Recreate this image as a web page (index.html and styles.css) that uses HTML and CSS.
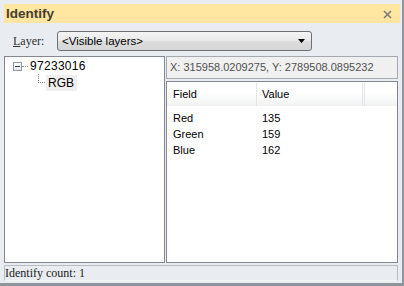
FILE: index.html
```html
<!DOCTYPE html>
<html>
<head>
<meta charset="utf-8">
<link rel="stylesheet" href="styles.css">
</head>
<body>
<div class="window">
  <div class="titlebar">
    <span class="title">Identify</span>
    <svg class="close" width="9" height="9" viewBox="0 0 9 9"><path d="M1 1 L8 8 M8 1 L1 8" stroke="#7b7b7b" stroke-width="1.6"/></svg>
  </div>
  <div class="toolbar">
    <span class="layer-label"><u>L</u>ayer:</span>
    <div class="combo">
      <span class="combo-text">&lt;Visible layers&gt;</span>
      <svg class="combo-arrow" width="7" height="4" viewBox="0 0 7 4"><path d="M0 0 H7 L3.5 4 Z" fill="#000"/></svg>
    </div>
  </div>
  <div class="panels">
    <div class="tree">
      <div class="node root">
        <span class="expander"><span class="minus"></span></span>
        <span class="hdots"></span>
        <span class="node-label">97233016</span>
      </div>
      <div class="node child">
        <svg class="connector" width="8" height="17" viewBox="0 0 8 17"><path d="M0.5 0 V9 M0 8.5 H8" stroke="#888" stroke-width="1" stroke-dasharray="1 1"/></svg>
        <span class="node-label selected">RGB</span>
      </div>
    </div>
    <div class="right">
      <div class="coords">X: 315958.0209275, Y: 2789508.0895232</div>
      <div class="list">
        <div class="list-head">
          <div class="col c-field">Field</div>
          <div class="col c-value">Value</div>
          <div class="col c-extra"></div>
        </div>
        <div class="row"><div class="col c-field">Red</div><div class="col c-value">135</div></div>
        <div class="row"><div class="col c-field">Green</div><div class="col c-value">159</div></div>
        <div class="row"><div class="col c-field">Blue</div><div class="col c-value">162</div></div>
      </div>
    </div>
  </div>
  <div class="status">Identify count: 1</div>
</div>
</body>
</html>
```

FILE: styles.css
```css
html, body {
  margin: 0;
  padding: 0;
}
body {
  width: 404px;
  height: 286px;
  overflow: hidden;
  background: #e9ecf0;
}
.window {
  width: 404px;
  height: 286px;
  box-sizing: border-box;
  background: #e9ecf0;
  border-right: 2px solid #8f959c;
  border-bottom: 3px solid #8f959c;
  padding: 4px 0 0 4px;
  display: flex;
  flex-direction: column;
  font-family: "Liberation Sans", Arial, sans-serif;
}
.titlebar {
  height: 19px;
  margin-right: 2px;
  background: #ffe6a1;
  display: flex;
  align-items: center;
  justify-content: space-between;
  padding: 0 8px 0 2px;
}
.title {
  font-weight: bold;
  font-size: 13.5px;
  color: #463d30;
  line-height: 19px;
}
.close {
  display: block;
  margin-top: 1px;
}
.toolbar {
  margin-top: 8px;
  height: 20px;
  display: flex;
  align-items: center;
}
.layer-label {
  font-family: "Liberation Serif", "Times New Roman", serif;
  font-size: 12px;
  color: #333;
  width: 44px;
  padding-left: 9px;
}
.combo {
  box-sizing: border-box;
  width: 255px;
  height: 20px;
  border: 1px solid #707070;
  border-radius: 3px;
  background: linear-gradient(#f4f4f4, #e9e9e9 50%, #dcdcdc 51%, #d6d6d6);
  display: flex;
  align-items: center;
  justify-content: space-between;
  padding: 0 6px 0 4px;
}
.combo-text {
  font-size: 11.5px;
  color: #000;
}
.combo-arrow {
  display: block;
}
.panels {
  margin-top: 5px;
  height: 207px;
  width: 394px;
  display: flex;
  gap: 1px;
}
.tree {
  box-sizing: border-box;
  width: 161px;
  border: 1px solid #828790;
  background: #fff;
  padding-top: 1px;
}
.node {
  display: flex;
  align-items: center;
  font-size: 12px;
  color: #000;
}
.root {
  height: 16px;
  padding-left: 8px;
}
.expander {
  box-sizing: border-box;
  width: 9px;
  height: 9px;
  border: 1px solid #8e9aa8;
  background: linear-gradient(#fff, #e6e6e6);
  display: flex;
  align-items: center;
  justify-content: center;
}
.minus {
  width: 5px;
  height: 1px;
  background: #26476b;
}
.hdots {
  width: 6px;
  border-top: 1px dotted #888;
  margin-right: 2px;
}
.node-label {
  letter-spacing: 0.3px;
}
.child {
  height: 18px;
  padding-left: 33px;
  align-items: flex-start;
}
.connector {
  display: block;
}
.selected {
  margin-top: 1px;
  height: 16px;
  line-height: 16px;
  padding: 0 3px 0 2px;
  background: #efefef;
  letter-spacing: 0;
}
.right {
  width: 232px;
  display: flex;
  flex-direction: column;
  gap: 2px;
}
.coords {
  box-sizing: border-box;
  height: 23px;
  border: 1px solid #a4a9b0;
  background: #f0f0f0;
  color: #505050;
  font-size: 11px;
  line-height: 21px;
  padding-left: 3px;
  white-space: nowrap;
}
.list {
  flex: 1;
  box-sizing: border-box;
  border: 1px solid #828790;
  background: #fff;
  font-size: 11px;
  color: #000;
}
.list-head {
  display: flex;
  height: 23px;
  background: linear-gradient(#ffffff, #ffffff 40%, #f1f2f3);
  margin-top: 1px;
  margin-bottom: 4px;
}
.list-head .col {
  line-height: 23px;
  border-right: 1px solid #e4e5e7;
}
.list-head .c-extra {
  width: 2px;
  border-left: 1px solid #e4e5e7;
  border-right: none;
  margin-left: 1px;
}
.col {
  box-sizing: border-box;
}
.c-field {
  width: 90px;
  padding-left: 6px;
}
.c-value {
  width: 106px;
  padding-left: 5px;
}
.row {
  display: flex;
  height: 16px;
  line-height: 16px;
}
.status {
  margin-top: 2px;
  width: 394px;
  box-sizing: border-box;
  height: 16px;
  border: 1px solid #b8bdc3;
  border-bottom-color: #f4f5f7;
  font-family: "Liberation Serif", "Times New Roman", serif;
  font-size: 12px;
  color: #222;
  line-height: 14px;
  padding-left: 0;
  white-space: nowrap;
}
```
